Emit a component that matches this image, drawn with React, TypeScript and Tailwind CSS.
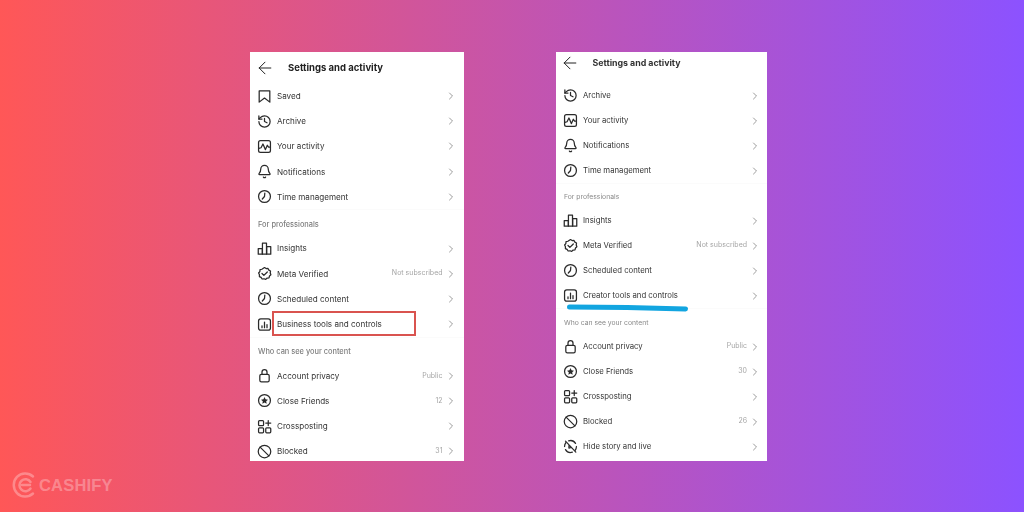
import { ArrowLeft, ChevronRight, History, Bell, Ban } from 'lucide-react';
import type { ReactNode } from 'react';

const sw = 2;

function Icon({ children }: { children: ReactNode }) {
  return (
    <svg viewBox="0 0 24 24" fill="none" stroke="currentColor" strokeWidth={sw} strokeLinecap="round" strokeLinejoin="round" className="w-[15px] h-[15px] shrink-0">
      {children}
    </svg>
  );
}

const BookmarkIcon = () => (
  <Icon>
    <path d="M3.5 3h17v18L12 14.5 3.5 21z" />
  </Icon>
);
const ActivityIcon = () => (
  <Icon>
    <rect x="2.5" y="2.5" width="19" height="19" rx="3" />
    <path d="M3 15l3.5-1 3-6 4 9 3-7 2 3h3" />
  </Icon>
);
const ClockIcon = () => (
  <Icon>
    <circle cx="12" cy="12" r="9.5" />
    <path d="M12.5 6.5 12 12l-3.5 4" />
  </Icon>
);
const BarsIcon = () => (
  <Icon>
    <rect x="2" y="12" width="6.5" height="9" />
    <rect x="8.7" y="3.5" width="6.5" height="17.5" />
    <rect x="15.5" y="9" width="6.5" height="12" />
  </Icon>
);
const VerifiedIcon = () => (
  <Icon>
    <path d="M12 2.5l2.6 1.6 3-.2 1.4 2.7 2.6 1.5-.4 3 1 2.9-2.2 2-.8 2.9-3 .4-2.2 2.1-2.8-1-3 .4-1.7-2.5-2.7-1.3.1-3-1.3-2.8 1.9-2.3.4-3 2.9-.7z" />
    <path d="M8 12l3 3 5.5-5.5" />
  </Icon>
);
const ToolsIcon = () => (
  <Icon>
    <rect x="2.5" y="3" width="19" height="18" rx="3.5" />
    <path d="M8 17v-3M12 17V8M16 17v-5" />
  </Icon>
);
const LockIcon = () => (
  <Icon>
    <rect x="4.5" y="10" width="15" height="12" rx="2.5" />
    <path d="M8 10V6.5a4 4 0 0 1 8 0V10" />
  </Icon>
);
const StarIcon = () => (
  <Icon>
    <circle cx="12" cy="12" r="9.5" />
    <path fill="currentColor" stroke="none" d="M12 6.5l1.7 3.6 3.9.5-2.9 2.7.8 3.9-3.5-2-3.5 2 .8-3.9-2.9-2.7 3.9-.5z" />
  </Icon>
);
const CrosspostIcon = () => (
  <Icon>
    <rect x="2.5" y="2.5" width="8" height="8" rx="1.5" />
    <rect x="2.5" y="14" width="8" height="8" rx="1.5" />
    <rect x="14" y="14" width="8" height="8" rx="1.5" />
    <path d="M18 2.5v8M14 6.5h8" />
  </Icon>
);
const HideIcon = () => (
  <Icon>
    <path d="M9 3a9.5 9.5 0 0 1 11 4M21.5 12a9.5 9.5 0 0 1-2 6M15 21a9.5 9.5 0 0 1-11-4M2.5 12a9.5 9.5 0 0 1 2-6" />
    <path d="M4 3.5 20.5 21M9.5 10.5v4l3.5-1" />
  </Icon>
);

const lucideProps = { size: 15, strokeWidth: sw, className: 'shrink-0' };

function Row({ icon, label, value, compact }: { icon: ReactNode; label: string; value?: string; compact?: boolean }) {
  return (
    <div className={`flex items-center pl-[7px] ${compact ? 'h-[25px] pr-[6px]' : 'h-[25.2px] pr-[7px]'}`}>
      <span className="text-[#2a2a2a]">{icon}</span>
      <span className={`flex-1 truncate ml-[5px] text-[#333] ${compact ? 'text-[7.75px]' : 'text-[8.1px]'}`}>{label}</span>
      {value && <span className="text-[7px] text-[#a5a5a5] mr-[2px]">{value}</span>}
      <ChevronRight size={12} strokeWidth={1.7} className="text-[#8a8a8a] shrink-0" />
    </div>
  );
}

function Section({ title, className }: { title: string; className: string }) {
  return (
    <div className={`flex items-center pl-[8px] pt-[3px] border-t border-[#fbfbfb] ${className}`}>
      {title}
    </div>
  );
}

export default function App() {
  return (
    <div
      className="relative w-[1024px] h-[512px] overflow-hidden flex items-start pt-[52px] pl-[250px] gap-[92.5px] bg-linear-to-r/srgb from-[#ff5757] to-[#8c52ff]"
      style={{ fontFamily: 'Inter, "Open Sans", sans-serif' }}
    >
      {/* left phone */}
      <div className="relative w-[213.5px] h-[409px] bg-white overflow-hidden blur-[0.4px]">
        <div className="flex items-center h-[31.5px] pl-[4.5px]">
          <ArrowLeft size={20} strokeWidth={1.2} className="text-[#222] shrink-0" />
          <span className="ml-[13.5px] text-[9.5px] font-bold text-[#222]">Settings and activity</span>
        </div>
        <Row icon={<BookmarkIcon />} label="Saved" />
        <Row icon={<History {...lucideProps} />} label="Archive" />
        <Row icon={<ActivityIcon />} label="Your activity" />
        <Row icon={<Bell {...lucideProps} />} label="Notifications" />
        <Row icon={<ClockIcon />} label="Time management" />
        <Section title="For professionals" className="h-[26.5px] text-[7.4px] font-medium text-[#7d7d7d]" />
        <Row icon={<BarsIcon />} label="Insights" />
        <Row icon={<VerifiedIcon />} label="Meta Verified" value="Not subscribed" />
        <Row icon={<ClockIcon />} label="Scheduled content" />
        <Row icon={<ToolsIcon />} label="Business tools and controls" />
        <Section title="Who can see your content" className="h-[26.5px] text-[7.4px] font-medium text-[#7d7d7d]" />
        <Row icon={<LockIcon />} label="Account privacy" value="Public" />
        <Row icon={<StarIcon />} label="Close Friends" value="12" />
        <Row icon={<CrosspostIcon />} label="Crossposting" />
        <Row icon={<Ban {...lucideProps} />} label="Blocked" value="31" />
        {/* red highlight */}
        <div className="absolute left-[22px] top-[259px] w-[144px] h-[25px] border-[2.5px] border-[#d9534f]" />
      </div>

      {/* right phone */}
      <div className="relative w-[211px] h-[409px] bg-white overflow-hidden blur-[0.4px]">
        <div className="flex items-start h-[31px] pl-[3.5px] pt-[1px]">
          <ArrowLeft size={20} strokeWidth={1.2} className="text-[#222] shrink-0" />
          <span className="ml-[13px] mt-[3px] text-[8.8px] leading-[14px] font-bold text-[#333]">Settings and activity</span>
        </div>
        <Row compact icon={<History {...lucideProps} />} label="Archive" />
        <Row compact icon={<ActivityIcon />} label="Your activity" />
        <Row compact icon={<Bell {...lucideProps} />} label="Notifications" />
        <Row compact icon={<ClockIcon />} label="Time management" />
        <Section title="For professionals" className="h-[25px] text-[6.8px] text-[#8a8a8a]" />
        <Row compact icon={<BarsIcon />} label="Insights" />
        <Row compact icon={<VerifiedIcon />} label="Meta Verified" value="Not subscribed" />
        <Row compact icon={<ClockIcon />} label="Scheduled content" />
        <Row compact icon={<ToolsIcon />} label="Creator tools and controls" />
        <Section title="Who can see your content" className="h-[26px] text-[6.8px] text-[#8a8a8a]" />
        <Row compact icon={<LockIcon />} label="Account privacy" value="Public" />
        <Row compact icon={<StarIcon />} label="Close Friends" value="30" />
        <Row compact icon={<CrosspostIcon />} label="Crossposting" />
        <Row compact icon={<Ban {...lucideProps} />} label="Blocked" value="26" />
        <Row compact icon={<HideIcon />} label="Hide story and live" />
        {/* blue scribble under the row */}
        <svg viewBox="0 0 122 8" className="absolute left-[10px] top-[252px] w-[123px] h-[8px]">
          <path d="M3 3C40 3 75 3.5 119 5" fill="none" stroke="#12a5e0" strokeWidth="5" strokeLinecap="round" />
        </svg>
      </div>

      {/* watermark */}
      <div className="absolute left-[12px] top-[472px] flex items-center text-white/30">
        <svg viewBox="0 0 26 26" className="w-[26px] h-[26px]" fill="none" stroke="currentColor" strokeLinecap="round">
          <path d="M21 4.5A11.5 11.5 0 1 0 21 21.5" strokeWidth="2.5" />
          <path d="M18.5 10A6 6 0 1 0 18.5 16.5M10 13h8" strokeWidth="2.5" />
        </svg>
        <span className="ml-[1px] text-[16.5px] font-bold tracking-[0.2px]" style={{ fontFamily: '"Liberation Sans", sans-serif' }}>CASHIFY</span>
      </div>
    </div>
  );
}
